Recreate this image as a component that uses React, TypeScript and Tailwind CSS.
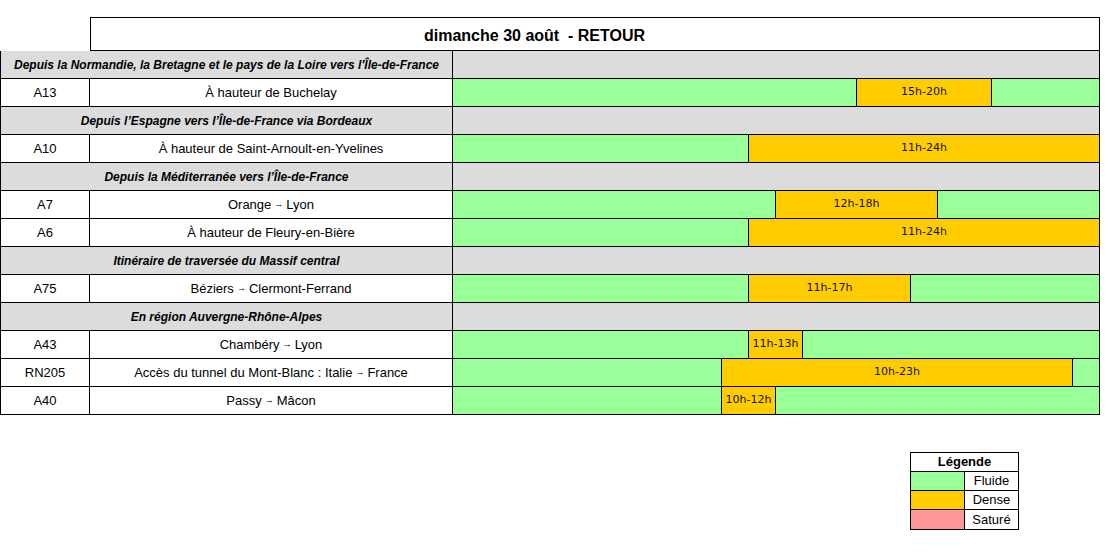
const FONT = { fontFamily: '"Liberation Sans", Arial, sans-serif' };

type Route = { road: string; place: React.ReactNode; from: number; to: number };
type Section = { title: string; routes: Route[] };

const Arrow = () => <span className="mx-[3px] text-[9px]">→</span>;

const sections: Section[] = [
  {
    title: "Depuis la Normandie, la Bretagne et le pays de la Loire vers l'Île-de-France",
    routes: [{ road: 'A13', place: 'À hauteur de Buchelay', from: 15, to: 20 }],
  },
  {
    title: 'Depuis l’Espagne vers l’Île-de-France via Bordeaux',
    routes: [{ road: 'A10', place: 'À hauteur de Saint-Arnoult-en-Yvelines', from: 11, to: 24 }],
  },
  {
    title: 'Depuis la Méditerranée vers l’Île-de-France',
    routes: [
      { road: 'A7', place: <>Orange <Arrow /> Lyon</>, from: 12, to: 18 },
      { road: 'A6', place: 'À hauteur de Fleury-en-Bière', from: 11, to: 24 },
    ],
  },
  {
    title: 'Itinéraire de traversée du Massif central',
    routes: [{ road: 'A75', place: <>Béziers <Arrow /> Clermont-Ferrand</>, from: 11, to: 17 }],
  },
  {
    title: 'En région Auvergne-Rhône-Alpes',
    routes: [
      { road: 'A43', place: <>Chambéry <Arrow /> Lyon</>, from: 11, to: 13 },
      { road: 'RN205', place: <>Accès du tunnel du Mont-Blanc : Italie <Arrow /> France</>, from: 10, to: 23 },
      { road: 'A40', place: <>Passy <Arrow /> Mâcon</>, from: 10, to: 12 },
    ],
  },
];

// x position of an hour mark on the page
const hx = (h: number) => 451 + 27 * h;

function Timeline({ from, to }: { from: number; to: number }) {
  const x0 = hx(from);
  const x1 = hx(to);
  const label = `${from}h-${to}h`;
  const labelCls = 'flex items-center justify-center text-[11px] text-[#111]';
  const labelFont = { fontFamily: '"DejaVu Sans", Verdana, sans-serif' };
  return (
    <div className="flex flex-1 h-full">
      <div className="h-full bg-[#99ff99]" style={{ width: x0 - 453 }} />
      {to >= 24 ? (
        <div className={`flex-1 h-full border-l border-black bg-[#ffcc00] ${labelCls}`} style={labelFont}>
          {label}
        </div>
      ) : (
        <>
          <div
            className={`h-full border-x border-black bg-[#ffcc00] ${labelCls}`}
            style={{ ...labelFont, width: x1 - x0 + 1 }}
          >
            {label}
          </div>
          <div className="flex-1 h-full bg-[#99ff99]" />
        </>
      )}
    </div>
  );
}

export default function App() {
  return (
    <div className="min-h-[557px] w-[1106px] bg-white pt-[17px] text-black" style={FONT}>
      <div className="w-[1100px]">
        {/* title row */}
        <div className="flex h-[34px]">
          <div className="w-[90px]" />
          <div className="flex flex-1 items-center border border-black pt-[4px] pl-[333px] text-[16px] font-bold whitespace-pre">
            dimanche 30 août  - RETOUR
          </div>
        </div>

        <div className="border-x border-black">
          {sections.map((s) => (
            <div key={s.title}>
              <div className="flex h-[28px] border-b border-black bg-[#dcdcdc]">
                <div className="flex w-[452px] items-center justify-center border-r border-black text-[12px] font-bold italic whitespace-nowrap">
                  {s.title}
                </div>
                <div className="flex-1" />
              </div>
              {s.routes.map((r) => (
                <div key={r.road} className="flex h-[28px] border-b border-black text-[13px]">
                  <div className="flex w-[89px] items-center justify-center border-r border-black">{r.road}</div>
                  <div className="flex w-[363px] items-center justify-center border-r border-black whitespace-nowrap">
                    {r.place}
                  </div>
                  <Timeline from={r.from} to={r.to} />
                </div>
              ))}
            </div>
          ))}
        </div>
      </div>

      {/* legend */}
      <div className="ml-[910px] mt-[37px] w-[109px] border border-black text-[13px]">
        <div className="flex h-[19px] items-center justify-center border-b border-black font-bold">Légende</div>
        {[
          ['Fluide', 'bg-[#99ff99]'],
          ['Dense', 'bg-[#ffcc00]'],
          ['Saturé', 'bg-[#ff9999]'],
        ].map(([name, bg], i) => (
          <div key={name} className={`flex h-[19px] ${i < 2 ? 'border-b border-black' : ''}`}>
            <div className={`w-[54px] border-r border-black ${bg}`} />
            <div className="flex flex-1 items-center justify-center">{name}</div>
          </div>
        ))}
      </div>
    </div>
  );
}
